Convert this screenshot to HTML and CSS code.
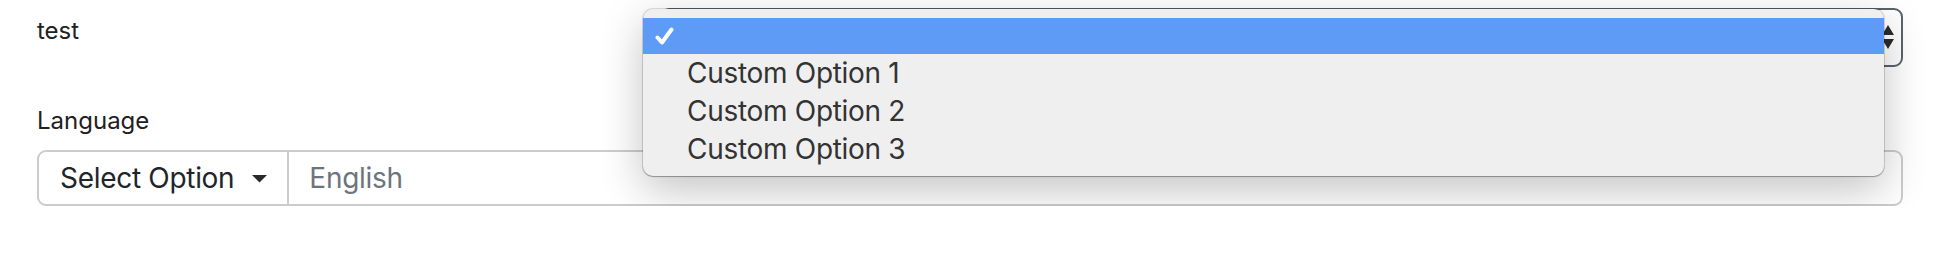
FILE: index.html
```html
<!DOCTYPE html>
<html lang="en">
<head>
<meta charset="utf-8">
<title>Form</title>
<link rel="stylesheet" href="styles.css">
</head>
<body>
<div class="page">
  <div class="form-row">
    <label class="label label-test">test</label>
    <div class="native-select">
      <svg class="updown" width="12" height="26" viewBox="0 0 12 26">
        <polygon points="6,0 12,10 0,10" fill="#2b2b2b"/>
        <polygon points="0,14 12,14 6,24" fill="#2b2b2b"/>
      </svg>
    </div>
  </div>

  <label class="label label-lang">Language</label>
  <div class="input-group">
    <div class="dd-btn">
      <span>Select Option</span>
      <svg class="caret" width="15" height="8" viewBox="0 0 15 8"><polygon points="0,0 15,0 7.5,7.5" fill="#2a2a2a"/></svg>
    </div>
    <div class="text-input">English</div>
  </div>

  <div class="popup">
    <div class="opt opt-selected">
      <svg class="check" width="19" height="19" viewBox="0 0 19 19"><path d="M2.5 10.5 L7 15.5 L16.5 2.5" fill="none" stroke="#ffffff" stroke-width="4" stroke-linecap="round" stroke-linejoin="round"/></svg>
    </div>
    <div class="opt">Custom Option 1</div>
    <div class="opt">Custom Option 2</div>
    <div class="opt">Custom Option 3</div>
  </div>
</div>
</body>
</html>
```

FILE: styles.css
```css
html, body {
  margin: 0;
  padding: 0;
  background: #ffffff;
}

body {
  font-family: "Inter", "Liberation Sans", sans-serif;
  color: #212529;
}

.page {
  position: relative;
  padding: 8px 33px 0 37px;
}

.form-row {
  display: grid;
  grid-template-columns: 623px 1fr;
  height: 59px;
}

.label {
  display: block;
  font-size: 24px;
  line-height: 34px;
  color: #212121;
}

.label-test {
  padding-top: 6px;
}

.label-lang {
  margin-top: 37px;
  margin-bottom: 12px;
}

.native-select {
  box-sizing: border-box;
  height: 59px;
  border: 2px solid #58636d;
  border-radius: 9px;
  background: #ffffff;
  display: flex;
  justify-content: flex-end;
  align-items: center;
  padding-right: 7px;
}

.updown {
  display: block;
}

.input-group {
  box-sizing: border-box;
  display: flex;
  height: 56px;
  border: 2px solid #cccccc;
  border-radius: 9px;
  font-size: 28px;
  letter-spacing: -0.3px;
}

.dd-btn {
  display: flex;
  align-items: center;
  gap: 18px;
  padding: 0 20px 0 21px;
  border-right: 2px solid #cccccc;
  color: #212529;
}

.caret {
  display: block;
  margin-top: 2px;
}

.text-input {
  display: flex;
  align-items: center;
  padding-left: 20px;
  color: #6c757d;
}

.popup {
  position: absolute;
  left: 643px;
  top: 9px;
  width: 1241px;
  box-sizing: border-box;
  padding: 9px 0 8px;
  background: #efefef;
  border-radius: 10px;
  box-shadow: 0 0 0 1px rgba(0, 0, 0, 0.13), 0 1px 1px rgba(0, 0, 0, 0.25), 0 14px 44px rgba(0, 0, 0, 0.24);
}

.opt {
  height: 38px;
  line-height: 38px;
  padding-left: 44px;
  font-size: 28px;
  letter-spacing: -0.3px;
  color: #333333;
}

.opt-selected {
  background: #5e9bf6;
  height: 36px;
  display: flex;
  align-items: center;
  padding-left: 12px;
}

.check {
  display: block;
}
```
